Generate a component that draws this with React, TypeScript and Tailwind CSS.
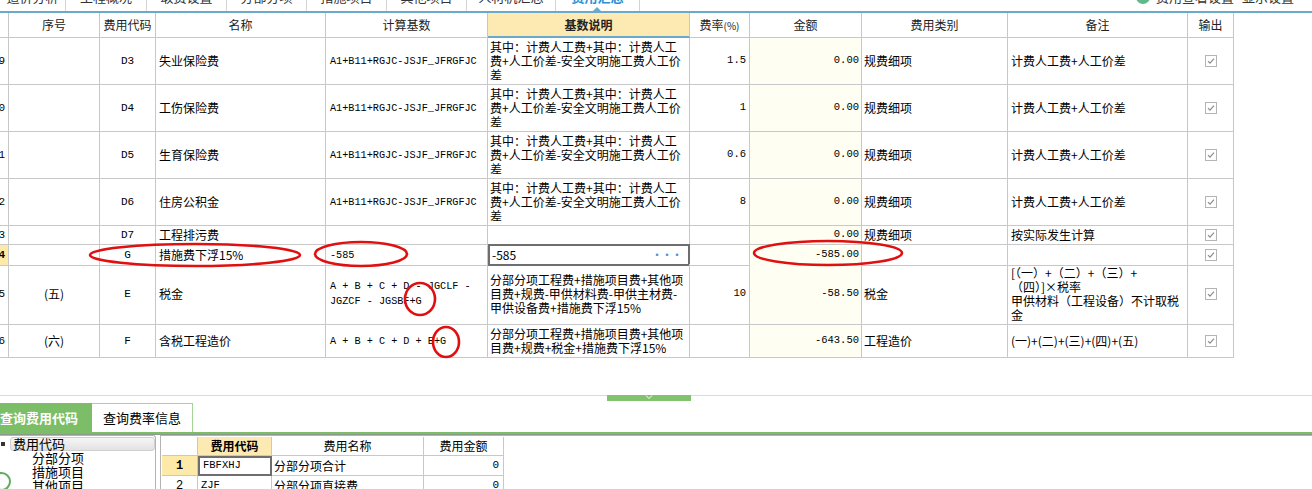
import React from "react"

const cn = "font-['Noto_Sans_CJK_SC',sans-serif]"
const mono = "font-['Liberation_Mono','Noto_Sans_CJK_SC',monospace]"
const cols = "grid grid-cols-[9px_91px_56px_170px_162px_202px_60px_112px_146px_180px_46px] w-[1234px]"
const cell = "border-r border-b border-[#c8c8c8] flex items-center overflow-hidden"

type Row = {
  n: string
  h: string
  seq?: string
  code: string
  name: string
  base: string[]
  desc: string[]
  rate: string
  amt: string
  cat: string
  note: string[]
  sel?: boolean
}

const d3desc = ["其中：计费人工费+其中：计费人工", "费+人工价差-安全文明施工费人工价", "差"]
const d3base = ["A1+B11+RGJC-JSJF_JFRGFJC"]

const rows: Row[] = [
  { n: "19", h: "h-[47px]", code: "D3", name: "失业保险费", base: d3base, desc: d3desc, rate: "1.5", amt: "0.00", cat: "规费细项", note: ["计费人工费+人工价差"] },
  { n: "20", h: "h-[47px]", code: "D4", name: "工伤保险费", base: d3base, desc: d3desc, rate: "1", amt: "0.00", cat: "规费细项", note: ["计费人工费+人工价差"] },
  { n: "21", h: "h-[47px]", code: "D5", name: "生育保险费", base: d3base, desc: d3desc, rate: "0.6", amt: "0.00", cat: "规费细项", note: ["计费人工费+人工价差"] },
  { n: "22", h: "h-[47px]", code: "D6", name: "住房公积金", base: d3base, desc: d3desc, rate: "8", amt: "0.00", cat: "规费细项", note: ["计费人工费+人工价差"] },
  { n: "23", h: "h-[19px]", code: "D7", name: "工程排污费", base: [], desc: [], rate: "", amt: "0.00", cat: "规费细项", note: ["按实际发生计算"] },
  { n: "24", h: "h-[19px]", code: "G", name: "措施费下浮15%", base: ["-585"], desc: ["-585"], rate: "", amt: "-585.00", cat: "", note: [], sel: true },
  {
    n: "25", h: "h-[61px]", seq: "(五)", code: "E", name: "税金",
    base: ["A + B + C + D - JGCLF -", "JGZCF - JGSBF+G"],
    desc: ["分部分项工程费+措施项目费+其他项", "目费+规费-甲供材料费-甲供主材费-", "甲供设备费+措施费下浮15%"],
    rate: "10", amt: "-58.50", cat: "税金",
    note: ["[（一）+（二）+（三）+", "（四）]×税率", "甲供材料（工程设备）不计取税", "金"],
  },
  {
    n: "26", h: "h-[33px]", seq: "(六)", code: "F", name: "含税工程造价",
    base: ["A + B + C + D + E+G"],
    desc: ["分部分项工程费+措施项目费+其他项", "目费+规费+税金+措施费下浮15%"],
    rate: "", amt: "-643.50", cat: "工程造价", note: ["(一)+(二)+(三)+(四)+(五)"],
  },
]

function Check() {
  return (
    <svg width="12" height="12" viewBox="0 0 12 12">
      <rect x="0.5" y="0.5" width="11" height="11" fill="#fff" stroke="#b4b4b4" />
      <path d="M3 6.2 L5 8.2 L9 3.6" fill="none" stroke="#8c8c8c" strokeWidth="1.2" />
    </svg>
  )
}

function Lines({ lines }: { lines: string[] }) {
  return (
    <div className="leading-[14px] whitespace-nowrap">
      {lines.map((l, i) => (
        <div key={i}>{l}</div>
      ))}
    </div>
  )
}

const tabs = [
  ["造价分析", "w-[66px]"],
  ["工程概况", "w-[81px]"],
  ["取费设置", "w-[80px]"],
  ["分部分项", "w-[80px]"],
  ["措施项目", "w-[80px]"],
  ["其他项目", "w-[80px]"],
  ["人材机汇总", "w-[89px]"],
]

export default function App() {
  return (
    <div className={`relative w-[1312px] h-[489px] overflow-hidden bg-white text-black ${cn}`}>
      {/* top tabs (cut off) */}
      <div className="h-[11px] overflow-hidden relative">
        <div className="flex -mt-[17px] h-[28px] text-[13px] text-[#333]">
          {tabs.map(([t, w]) => (
            <div key={t} className={`${w} flex items-center justify-center border-r border-[#d4d4d4]`}>
              {t}
            </div>
          ))}
          <div className="w-[84px] flex items-center justify-center border-r border-[#d4d4d4] text-[#2a90d6] font-bold">
            费用汇总
          </div>
          <div className="ml-auto flex items-center gap-[6px] pr-[10px]">
            <div className="w-[14px] h-[14px] rounded-full bg-[#5fb98a] ml-[0px]" />
            <span className="w-[80px]">费用查看设置</span>
            <span className="w-[60px]">显示设置</span>
          </div>
        </div>
        <div className="absolute left-[593px] bottom-0 w-0 h-0 border-l-[4px] border-r-[4px] border-b-[4px] border-l-transparent border-r-transparent border-b-[#69aacb]" />
      </div>
      <div className="h-[2px] bg-[#69aacb]" />

      {/* main grid header */}
      <div className={`${cols} h-[25px] text-[12px] text-[#222]`}>
        <div className={cell} />
        <div className={`${cell} justify-center`}>序号</div>
        <div className={`${cell} justify-center`}>费用代码</div>
        <div className={`${cell} justify-center`}>名称</div>
        <div className={`${cell} justify-center`}>计算基数</div>
        <div className="border-r border-[#c8c8c8] border-b-2 border-b-[#69aacb] bg-[#fdeab2] flex items-center justify-center font-bold">
          基数说明
        </div>
        <div className={`${cell} justify-center`}>
          费率<span className="text-[10px]">(%)</span>
        </div>
        <div className={`${cell} justify-center`}>金额</div>
        <div className={`${cell} justify-center`}>费用类别</div>
        <div className={`${cell} justify-center`}>备注</div>
        <div className={`${cell} justify-center`}>输出</div>
      </div>

      {/* body rows */}
      {rows.map((r) => (
        <div key={r.n} className={`${cols} ${r.h} text-[12px]`}>
          <div className={`${cell} justify-end pr-[3px] ${mono} text-[11px] ${r.sel ? "bg-[#fde9a8] font-bold" : ""}`}>
            <span className="whitespace-nowrap">{r.n}</span>
          </div>
          <div className={`${cell} justify-center`}>{r.seq ?? ""}</div>
          <div className={`${cell} justify-center ${mono} text-[11px]`}>{r.code}</div>
          <div className={`${cell} pl-[3px]`}>{r.name}</div>
          <div className={`${cell} pl-[4px] ${mono} text-[10.2px]`}>
            <div className="leading-[15px] whitespace-nowrap">
              {r.base.map((l, i) => (
                <div key={i}>{l}</div>
              ))}
            </div>
          </div>
          {r.sel ? (
            <div className="border-2 border-[#6e6e6e] flex items-center justify-between pl-[2px] pr-[6px] -mt-px">
              <span>-585</span>
              <span className="text-[#5b8ec7] text-[10px] font-bold leading-none">···</span>
            </div>
          ) : (
            <div className={`${cell} pl-[2px]`}>
              <Lines lines={r.desc} />
            </div>
          )}
          <div className={`${cell} justify-end pr-[3px] ${mono} text-[10.5px]`}>{r.rate}</div>
          <div className={`${cell} justify-end pr-[2px] bg-[#fffef2] ${mono} text-[10.5px]`}>{r.amt}</div>
          <div className={`${cell} pl-[2px]`}>{r.cat}</div>
          <div className={`${cell} pl-[3px]`}>
            <Lines lines={r.note} />
          </div>
          <div className={`${cell} justify-center`}>
            <Check />
          </div>
        </div>
      ))}

      <div className="h-[37px]" />

      {/* splitter */}
      <div className="relative h-px bg-[#dadada]">
        <div className="absolute left-[607px] top-0 w-[84px] h-[6px] bg-[#82c26e] flex justify-center">
          <svg width="8" height="5" viewBox="0 0 8 5">
            <path d="M1 0.5 L4 3.5 L7 0.5" fill="none" stroke="#fff" strokeWidth="1" />
          </svg>
        </div>
      </div>
      <div className="h-[7px]" />

      {/* bottom tabs */}
      <div className="flex h-[29px] text-[13px]">
        <div className="w-[92px] bg-[#7cbd67] text-white font-bold flex items-center pl-0 whitespace-nowrap overflow-hidden">
          查询费用代码
        </div>
        <div className="w-[101px] border-t border-r border-[#a6d496] flex items-center justify-center">
          查询费率信息
        </div>
      </div>
      <div className="h-[2px] bg-[#7cbd67]" />
      <div className="h-px bg-[#8c9a8c]" />

      {/* bottom panels */}
      <div className="flex h-[60px]">
        <div className="relative w-[156px] border-r border-t border-[#b4b4b4] rounded-tr-[3px] text-[13px] leading-[14px] pt-[1px]">
          <div className="flex items-center">
            <div className="w-[4px] h-[4px] bg-[#333] ml-[1px] mr-[5px]" />
            <div className="flex-1 h-[14px] rounded-[3px] bg-gradient-to-b from-[#f6f6f6] to-[#e2e2e2] border border-[#d0d0d0] flex items-center pl-[2px]">
              费用代码
            </div>
          </div>
          <div className="pl-[32px]">分部分项</div>
          <div className="pl-[32px]">措施项目</div>
          <div className="pl-[32px]">其他项目</div>
          <div className="absolute left-[-8px] top-[36px] w-[19px] h-[19px] rounded-full border-2 border-[#5fae5f] bg-white" />
        </div>
        <div className="ml-[4px] flex-1 border-l border-t border-[#b4b4b4] text-[12px] pt-px">
          <div className="grid grid-cols-[36px_74px_152px_80px] w-[342px] ml-px h-[19px]">
            <div className="border-r border-b border-[#c8c8c8]" />
            <div className="border-r border-b border-[#c8c8c8] bg-[#fdeab2] font-bold flex items-center justify-center">费用代码</div>
            <div className="border-r border-b border-[#c8c8c8] flex items-center justify-center">费用名称</div>
            <div className="border-r border-b border-[#c8c8c8] flex items-center justify-center">费用金额</div>
          </div>
          <div className="grid grid-cols-[36px_74px_152px_80px] w-[342px] ml-px h-[20px]">
            <div className={`border-r border-b border-[#c8c8c8] bg-[#fde9a8] font-bold flex items-center justify-center ${mono} text-[12px]`}>1</div>
            <div className={`border-2 border-[#6e6e6e] flex items-center pl-[3px] ${mono} text-[10.5px]`}>FBFXHJ</div>
            <div className="border-r border-b border-[#c8c8c8] flex items-center pl-[2px]">分部分项合计</div>
            <div className={`border-r border-b border-[#c8c8c8] flex items-center justify-end pr-[4px] ${mono} text-[11px]`}>0</div>
          </div>
          <div className="grid grid-cols-[36px_74px_152px_80px] w-[342px] ml-px h-[20px]">
            <div className={`border-r border-b border-[#c8c8c8] flex items-center justify-center ${mono} text-[12px]`}>2</div>
            <div className={`border-r border-b border-[#c8c8c8] flex items-center pl-[3px] ${mono} text-[10.5px]`}>ZJF</div>
            <div className="border-r border-b border-[#c8c8c8] flex items-center pl-[2px]">分部分项直接费</div>
            <div className={`border-r border-b border-[#c8c8c8] flex items-center justify-end pr-[4px] ${mono} text-[11px]`}>0</div>
          </div>
        </div>
      </div>

      {/* red annotation marks */}
      <svg className="absolute inset-0 pointer-events-none" width="1312" height="489">
        <g fill="none" stroke="#e01010" strokeWidth="2.6">
          <ellipse cx="195" cy="255" rx="105" ry="11" />
          <ellipse cx="361" cy="254" rx="46" ry="12" />
          <ellipse cx="828" cy="253" rx="74" ry="12" />
          <ellipse cx="420" cy="299" rx="15" ry="16" />
          <ellipse cx="446" cy="342" rx="13" ry="15" />
        </g>
      </svg>
    </div>
  )
}
